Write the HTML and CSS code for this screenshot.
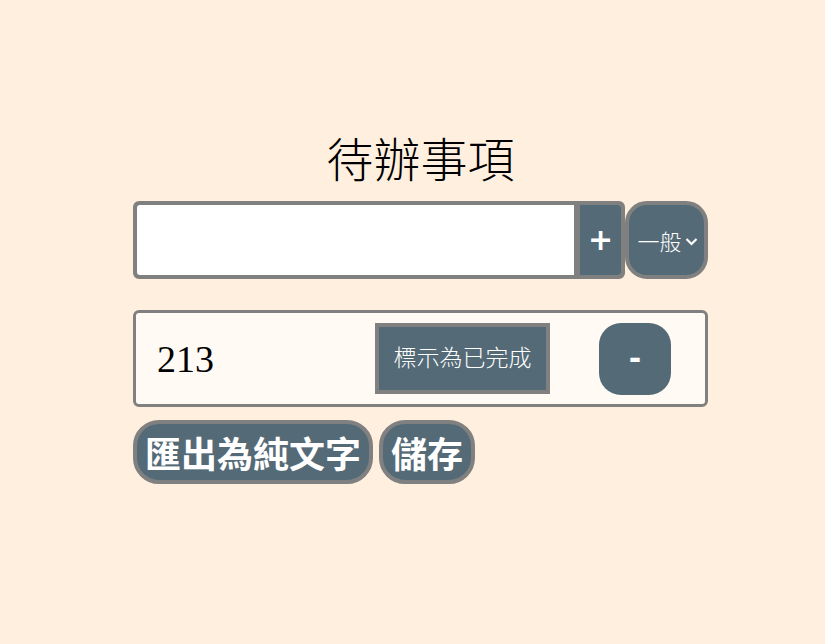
FILE: index.html
```html
<!DOCTYPE html>
<html lang="zh-Hant">
<head>
<meta charset="utf-8">
<title>待辦事項</title>
<link rel="stylesheet" href="styles.css">
</head>
<body>
<main class="app">
  <h1 class="title">待辦事項</h1>
  <div class="entry-row">
    <div class="entry">
      <input class="entry-input" type="text">
      <button class="add-btn">+</button>
    </div>
    <div class="category">
      <span class="category-label">一般</span>
      <svg class="chev" width="13" height="9" viewBox="0 0 13 9"><path d="M1.5 2 L6.5 7 L11.5 2" fill="none" stroke="#fff" stroke-width="2.2"/></svg>
    </div>
  </div>
  <div class="item">
    <span class="item-text">213</span>
    <button class="done-btn">標示為已完成</button>
    <button class="remove-btn">-</button>
  </div>
  <div class="actions">
    <button class="pill-btn">匯出為純文字</button>
    <button class="pill-btn">儲存</button>
  </div>
</main>
</body>
</html>
```

FILE: styles.css
```css
* { box-sizing: border-box; }
html, body { margin: 0; padding: 0; }
body {
  background: #ffefdf;
  width: 825px;
  height: 644px;
  font-family: "Noto Sans CJK TC", "Noto Sans", sans-serif;
}
.app {
  width: 575px;
  margin-left: 133px;
  padding-top: 124px;
  display: flex;
  flex-direction: column;
}
.title {
  margin: 0;
  height: 77px;
  text-align: center;
  font-weight: 300;
  font-size: 47px;
  line-height: 66px;
  color: #000;
}
.entry-row {
  display: flex;
  height: 78px;
}
.entry {
  width: 492px;
  display: flex;
  gap: 6px;
  background: #808080;
  border: 4px solid #808080;
  border-radius: 6px;
}
.entry-input {
  flex: 1;
  border: none;
  margin: 0;
  background: #fff;
  border-radius: 3px 0 0 3px;
  outline: none;
}
.add-btn {
  width: 41px;
  border: none;
  margin: 0;
  padding: 0;
  background: #556a77;
  color: #fff;
  border-radius: 0 4px 4px 0;
  font-family: "DejaVu Sans", sans-serif;
  font-weight: 700;
  font-size: 30px;
  line-height: 1;
}
.category {
  width: 83px;
  background: #556a77;
  border: 4px solid #808080;
  border-radius: 22px;
  display: flex;
  align-items: center;
  justify-content: center;
  gap: 3px;
  color: #fff;
  padding-left: 2px;
}
.category-label {
  font-size: 22px;
  font-weight: 300;
  line-height: 1;
}
.chev { margin-top: 2px; }
.item {
  margin-top: 31px;
  height: 97px;
  background: #fffaf4;
  border: 3px solid #808080;
  border-radius: 6px;
  display: flex;
  align-items: center;
  padding-left: 21px;
}
.item-text {
  width: 218px;
  font-family: "Liberation Serif", serif;
  font-size: 38px;
}
.done-btn {
  width: 175px;
  height: 71px;
  margin-bottom: 1px;
  background: #556a77;
  border: 4px solid #808080;
  border-radius: 0;
  color: #fff;
  font-family: "Noto Sans CJK TC", sans-serif;
  font-weight: 300;
  font-size: 23px;
  line-height: 1;
  padding: 0 0 3px;
}
.remove-btn {
  margin-left: 49px;
  width: 72px;
  height: 72px;
  background: #556a77;
  border: none;
  border-radius: 22px;
  color: #fff;
  font-family: "DejaVu Sans", sans-serif;
  font-weight: 700;
  font-size: 30px;
  padding: 0;
}
.actions {
  margin-top: 13px;
  display: flex;
  gap: 6px;
}
.pill-btn {
  height: 64px;
  background: #556a77;
  border: 4px solid #808080;
  border-radius: 26px;
  color: #fff;
  font-family: "Noto Sans CJK TC", sans-serif;
  font-weight: 700;
  font-size: 36px;
  line-height: 1;
  padding: 0 8px;
}
```
